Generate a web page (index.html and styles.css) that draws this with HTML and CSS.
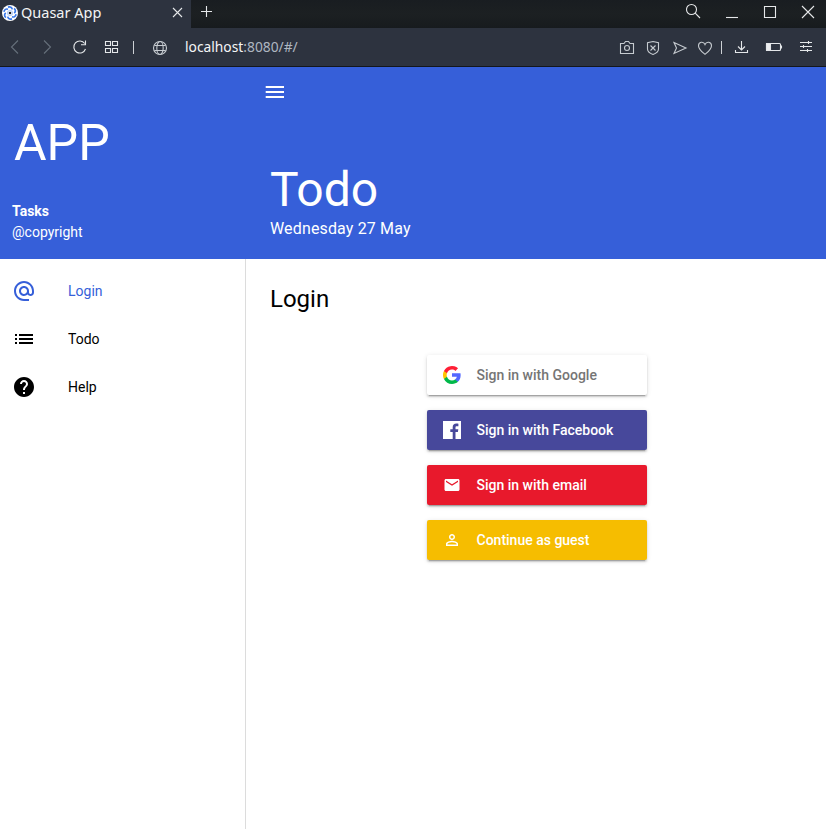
FILE: index.html
```html
<!DOCTYPE html>
<html lang="en">
<head>
<meta charset="utf-8">
<title>Quasar App</title>
<link rel="stylesheet" href="styles.css">
</head>
<body>
<header class="browser">
  <div class="tabs">
    <div class="tab">
      <svg class="favicon" width="16" height="16" viewBox="0 0 16 16"><circle cx="8" cy="8" r="8" fill="#fff"/><g fill="none" stroke="#3676e8" stroke-width="1.7"><path id="arm" d="M6 2.100Q9.500 1.200 10.300 4.400"/><use href="#arm" transform="rotate(60 8 8)"/><use href="#arm" transform="rotate(120 8 8)"/><use href="#arm" transform="rotate(180 8 8)"/><use href="#arm" transform="rotate(240 8 8)"/><use href="#arm" transform="rotate(300 8 8)"/></g><circle cx="8" cy="8" r="2.500" fill="none" stroke="#b5cdf6"/><circle cx="8" cy="8" r="1.300" fill="#171e2c"/></svg>
      <span class="tab-title">Quasar App</span>
      <svg class="tab-close" width="11" height="11" viewBox="0 0 11 11"><path d="M1 1l9 9M10 1l-9 9"/></svg>
    </div>
    <svg class="new-tab" width="11" height="11" viewBox="0 0 11 11"><path d="M5.500 0v11M0 5.500h11"/></svg>
    <div class="window-controls">
      <svg width="16" height="16" viewBox="0 0 16 16"><circle cx="5.500" cy="6.500" r="5"/><path d="M9.200 10.200l4.800 4.800"/></svg>
      <svg width="16" height="16" viewBox="0 0 16 16"><path d="M2 14.500h12"/></svg>
      <svg width="16" height="16" viewBox="0 0 16 16"><path d="M2.500 3.500h11v11h-11z"/></svg>
      <svg width="16" height="16" viewBox="0 0 16 16"><path d="M2 3l12 12M14 3L2 15"/></svg>
    </div>
  </div>
  <div class="toolbar">
    <div class="tools tools-left">
      <svg class="dim" width="18" height="18" viewBox="0 0 18 18"><path d="M12 2.500L5.500 9l6.500 6.500"/></svg>
      <svg class="dim" width="18" height="18" viewBox="0 0 18 18"><path d="M6 2.500L12.500 9 6 15.500"/></svg>
      <svg class="strong" width="18" height="18" viewBox="0 0 18 18"><path d="M13.700 5.500A6 6 0 1 0 14.500 11M14.500 2.500v4.200h-4.500"/></svg>
      <svg class="strong" width="18" height="18" viewBox="0 0 18 18"><path d="M3.500 3.500h5v4h-5zM10.500 3.500h5v4h-5zM3.500 10.500h5v4h-5zM10.500 10.500h5v4h-5z"/></svg>
      <i class="divider"></i>
      <svg width="18" height="18" viewBox="0 0 18 18"><circle cx="9" cy="10" r="6.500"/><ellipse cx="9" cy="10" rx="3.200" ry="6.500"/><path d="M3.500 7.500h11M3.500 12.500h11"/></svg>
    </div>
    <div class="url"><b>localhost</b>:8080/#/</div>
    <div class="tools tools-right">
      <svg width="18" height="18" viewBox="0 0 18 18"><path d="M2.500 5.500H6l1.500-2h3l1.500 2h3.500v10h-13z"/><circle cx="9" cy="10" r="2.500"/></svg>
      <svg width="18" height="18" viewBox="0 0 18 18"><path d="M9 3.500l5.500 1.300v6.200q0 3.500-5.500 5.500-5.500-2-5.500-5.500V4.800z"/><path d="M6.500 7.500l5 5M11.500 7.500l-5 5"/></svg>
      <svg width="18" height="18" viewBox="0 0 18 18"><path d="M3 4.500L15 10 3 15.500 5.500 10z"/></svg>
      <svg width="18" height="18" viewBox="0 0 18 18"><path d="M9 16.300C6 13.800 2.500 11.500 2.500 7.700c0-4 5-4.800 6.500-1.200 1.500-3.600 6.500-2.800 6.500 1.200 0 3.800-3.500 6.100-6.500 8.600z"/></svg>
      <i class="divider"></i>
      <svg class="strong" width="18" height="18" viewBox="0 0 18 18"><path d="M8.500 3v9M5 8.500L8.500 12 12 8.500M2.500 12v2.500h12V12"/></svg>
      <svg class="strong" width="18" height="18" viewBox="0 0 18 18"><rect x="1.500" y="5.500" width="14" height="7" rx="1"/><path class="charge" d="M1.500 5.500h4v7h-4z"/><path d="M16.500 7.500v3"/></svg>
      <svg class="strong" width="18" height="18" viewBox="0 0 18 18"><path d="M3 4.500h12M3 8.500h12M3 12.500h12M11.500 3v3M6.500 7v3M10.500 11v3"/></svg>
    </div>
  </div>
</header>
<div class="app">
  <aside class="drawer">
    <div class="brand">
      <div class="brand-name">APP</div>
      <div class="brand-title">Tasks</div>
      <div class="brand-copy">@copyright</div>
    </div>
    <nav class="menu">
      <a class="menu-item active"><svg width="24" height="24" viewBox="0 0 24 24"><path d="M12 1.950c-5.520 0-10 4.480-10 10s4.480 10 10 10h5v-2h-5c-4.340 0-8-3.660-8-8s3.660-8 8-8 8 3.660 8 8v1.430c0 .79-.71 1.570-1.500 1.570s-1.500-.78-1.500-1.570v-1.430c0-2.760-2.240-5-5-5s-5 2.240-5 5 2.240 5 5 5c1.380 0 2.640-.56 3.540-1.470.65.89 1.770 1.470 2.960 1.470 1.970 0 3.500-1.600 3.500-3.570v-1.430c0-5.520-4.480-10-10-10zm0 13c-1.660 0-3-1.340-3-3s1.340-3 3-3 3 1.340 3 3-1.340 3-3 3z"/></svg><span>Login</span></a>
      <a class="menu-item"><svg width="24" height="24" viewBox="0 0 24 24"><path d="M3 13h2v-2H3v2zm0 4h2v-2H3v2zm0-8h2V7H3v2zm4 4h14v-2H7v2zm0 4h14v-2H7v2zM7 7v2h14V7H7z"/></svg><span>Todo</span></a>
      <a class="menu-item"><svg width="24" height="24" viewBox="0 0 24 24"><path d="M12 2C6.480 2 2 6.480 2 12s4.480 10 10 10 10-4.480 10-10S17.520 2 12 2zm1 17h-2v-2h2v2zm2.070-7.750l-.9.920C13.450 12.900 13 13.500 13 15h-2v-.5c0-1.100.45-2.100 1.170-2.830l1.240-1.260c.37-.36.59-.86.59-1.410 0-1.100-.9-2-2-2s-2 .9-2 2H8c0-2.210 1.790-4 4-4s4 1.790 4 4c0 .88-.36 1.680-.93 2.250z"/></svg><span>Help</span></a>
    </nav>
  </aside>
  <main class="page">
    <div class="banner">
      <svg class="burger" width="24" height="24" viewBox="0 0 24 24"><path d="M2.700 18H21v-2H2.700v2zm0-5H21v-2H2.700v2zm0-7v2H21V6H2.700z"/></svg>
      <div class="banner-title">Todo</div>
      <div class="banner-date">Wednesday 27 May</div>
    </div>
    <section class="content">
      <h1>Login</h1>
      <div class="providers">
        <button class="provider google"><svg width="18" height="18" viewBox="0 0 18 18"><path fill="#5468ff" d="M17.640 9.200c0-.64-.06-1.250-.16-1.840H9v3.480h4.840a4.140 4.140 0 0 1-1.790 2.720v2.260h2.900c1.700-1.570 2.690-3.880 2.690-6.620z"/><path fill="#00b84a" d="M9 18c2.430 0 4.470-.8 5.960-2.180l-2.910-2.260c-.8.540-1.840.86-3.050.86-2.340 0-4.330-1.580-5.040-3.710H.96v2.330A9 9 0 0 0 9 18z"/><path fill="#ffc400" d="M3.960 10.710a5.400 5.400 0 0 1 0-3.420V4.960H.96a9 9 0 0 0 0 8.080z"/><path fill="#ff1f35" d="M9 3.580c1.320 0 2.510.45 3.440 1.350l2.580-2.590A9 9 0 0 0 .96 4.960l3 2.330C4.670 5.160 6.660 3.580 9 3.580z"/></svg><span>Sign in with Google</span></button>
        <button class="provider facebook"><svg width="18" height="18" viewBox="0 0 18 18"><path fill="#fff" d="M0 0h18v18h-5.500v-7h2.400l.4-2.700h-2.800V6.500c0-.8.300-1.300 1.400-1.300h1.500V2.700c-.3 0-1.100-.1-2.100-.1-2.200 0-3.600 1.300-3.600 3.700v2H7.300V11h2.400v7H0z"/></svg><span>Sign in with Facebook</span></button>
        <button class="provider email"><svg width="18" height="18" viewBox="0 0 24 24"><path fill="#fff" d="M20 4H4c-1.100 0-1.990.9-1.990 2L2 18c0 1.100.9 2 2 2h16c1.100 0 2-.9 2-2V6c0-1.100-.9-2-2-2zm0 4l-8 5-8-5V6l8 5 8-5v2z"/></svg><span>Sign in with email</span></button>
        <button class="provider guest"><svg width="18" height="18" viewBox="0 0 24 24"><path fill="#fff" d="M12 5.900a2.100 2.100 0 1 1 0 4.200 2.100 2.100 0 0 1 0-4.200m0 9c2.970 0 6.100 1.460 6.100 2.100v1.100H5.900V17c0-.64 3.130-2.100 6.100-2.100M12 4C9.790 4 8 5.790 8 8s1.790 4 4 4 4-1.790 4-4-1.790-4-4-4zm0 9c-2.670 0-8 1.340-8 4v3h16v-3c0-2.660-5.330-4-8-4z"/></svg><span>Continue as guest</span></button>
      </div>
    </section>
  </main>
</div>
</body>
</html>
```
FILE: styles.css
```css
* { box-sizing: border-box; }
body {
  margin: 0;
  height: 829px;
  display: flex;
  flex-direction: column;
  overflow: hidden;
  background: #fff;
  font: 14px/21px Roboto, sans-serif;
  color: #000;
}
svg { display: block; flex: none; }

.browser { font-family: "Noto Sans", sans-serif; color: #f3f4f5; }
.browser svg { fill: none; stroke: #e6e8ea; stroke-width: 1.1; }
.browser .favicon { stroke: none; }
.tabs { height: 28px; display: flex; background: linear-gradient(#191d21, #1c2022 50%, #171b1e); }
.tab {
  width: 191px;
  padding: 0 8px 3px 2px;
  display: flex;
  align-items: center;
  background: #2d333f;
}
.tab-title { margin: 0 0 2px 3px; font-size: 14.5px; line-height: 20px; white-space: nowrap; }
.tab-close { margin-left: auto; }
.new-tab { margin: 6px 0 0 10px; }
.window-controls { margin: 3px 10px 0 auto; display: flex; gap: 22px; }
.toolbar {
  height: 39px;
  padding-right: 5px;
  display: flex;
  background: #2d333f;
  border-bottom: 1px solid #14171b;
}
.tools { display: grid; align-items: center; justify-items: center; }
.tools-left { grid-template-columns: 30px 34px 32px 30px 14px 40px; }
.tools-right { grid-template-columns: 26px 26px 28px 22px 10px 31px 34px 30px; margin-left: auto; }
.browser .tools svg { stroke: #c6cbd0; }
.browser .tools .strong { stroke: #e4e7e9; }
.browser .tools .dim { stroke: #66707b; }
.browser .charge { fill: #eceef0; }
.divider { width: 1px; height: 13px; background: #cdd1d5; }
.url { padding-left: 5px; font-size: 13.8px; line-height: 37px; color: #aeb6c0; }
.url b { font-weight: 400; color: #f5f6f7; }

.app { flex: 1; display: flex; }
.drawer { width: 246px; display: flex; flex-direction: column; }
.brand { height: 192px; padding: 46px 12px 0; background: #365fd9; color: #fff; }
.brand-name { padding-left: 2px; font-size: 50px; line-height: 60px; }
.brand-title { margin-top: 28px; font-weight: 700; }
.menu { flex: 1; padding-top: 8px; border-right: 1px solid #dcdcdc; }
.menu-item { height: 48px; padding-left: 12px; display: flex; align-items: center; gap: 32px; }
.menu-item svg { fill: currentColor; }
.active { color: #365fd9; }
.page { flex: 1; }
.banner { height: 192px; padding: 13px 0 0 24px; background: #365fd9; color: #fff; }
.burger { margin-left: -7px; fill: #fff; }
.banner-title { margin-top: 61px; font-size: 48px; line-height: 50px; }
.banner-date { margin-top: 2px; font-size: 16px; line-height: 24px; letter-spacing: .15px; }
.content { padding: 24px 23px 0 24px; }
h1 { margin: 0; font-size: 24px; line-height: 32px; font-weight: 400; }
.providers { width: 220px; margin: 40px auto 0; display: grid; gap: 15px; }
.provider {
  height: 40px;
  padding: 0 16px;
  border: 0;
  border-radius: 2px;
  display: flex;
  align-items: center;
  font: 500 14px/20px Roboto, sans-serif;
  color: #fff;
  box-shadow: 0 2px 2px rgba(0,0,0,.14), 0 3px 1px -2px rgba(0,0,0,.2), 0 1px 5px rgba(0,0,0,.12);
}
.provider span { margin-left: 16px; }
.google { background: #fff; color: #757575; }
.facebook { background: #47489b; }
.email { background: #e8192c; }
.guest { background: #f6bd00; }
```
